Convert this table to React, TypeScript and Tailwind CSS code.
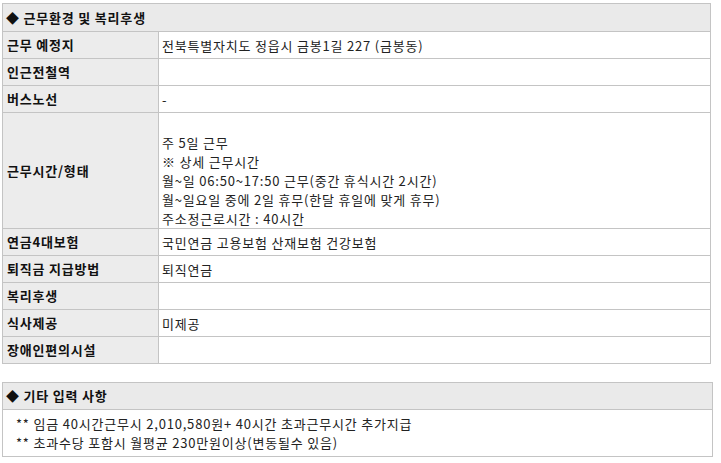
import React from 'react';

const font = { fontFamily: '"Malgun Gothic", "Noto Sans CJK KR", "Noto Sans", sans-serif' };

const rows: { label: string; value: React.ReactNode; tall?: boolean }[] = [
  { label: '근무 예정지', value: '전북특별자치도 정읍시 금봉1길 227 (금봉동)' },
  { label: '인근전철역', value: '' },
  { label: '버스노선', value: '-' },
  {
    label: '근무시간/형태',
    tall: true,
    value: (
      <>
        <br />
        주 5일 근무
        <br />※ 상세 근무시간
        <br />월~일 06:50~17:50 근무(중간 휴식시간 2시간)
        <br />월~일요일 중에 2일 휴무(한달 휴일에 맞게 휴무)
        <br />주소정근로시간 : 40시간
      </>
    ),
  },
  { label: '연금4대보험', value: '국민연금 고용보험 산재보험 건강보험' },
  { label: '퇴직금 지급방법', value: '퇴직연금' },
  { label: '복리후생', value: '' },
  { label: '식사제공', value: '미제공' },
  { label: '장애인편의시설', value: '' },
];

export default function App() {
  return (
    <div className="min-h-[463px] bg-white pl-[2px] pt-[3px] text-[13px] tracking-[0.8px] text-[#222]" style={font}>
      <table className="w-[709px] border-collapse border border-[#c4c4c4]">
        <tbody>
          <tr className="h-[28px] bg-[#eaeaea]">
            <td colSpan={2} className="border border-[#c4c4c4] px-[3px] font-bold text-[#111]">
              ◆ 근무환경 및 복리후생
            </td>
          </tr>
          {rows.map((row) => (
            <tr key={row.label} className={row.tall ? 'h-[116px]' : 'h-[27px]'}>
              <td className="w-[156px] border border-[#c4c4c4] bg-[#ececec] px-[4px] font-bold text-[#111]">
                {row.label}
              </td>
              <td className="border border-[#c4c4c4] px-[3px] leading-[19px]">{row.value}</td>
            </tr>
          ))}
        </tbody>
      </table>

      <div className="mt-[18px] w-[711px] border border-[#c4c4c4]">
        <div className="flex h-[27px] items-center border-b border-[#c4c4c4] bg-[#eaeaea] px-[3px] font-bold text-[#111]">
          ◆ 기타 입력 사항
        </div>
        <div className="px-[13px] py-[4px] leading-[19px]">
          <div>** 임금 40시간근무시 2,010,580원+ 40시간 초과근무시간 추가지급</div>
          <div>** 초과수당 포함시 월평균 230만원이상(변동될수 있음)</div>
        </div>
      </div>
    </div>
  );
}
